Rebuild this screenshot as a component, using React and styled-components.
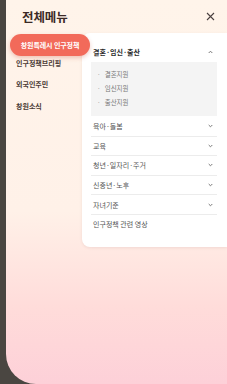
import React from 'react';
import styled, { createGlobalStyle } from 'styled-components';

const GlobalStyle = createGlobalStyle`
  html, body { margin: 0; padding: 0; }
  body {
    background: #4a4641;
    font-family: "Noto Sans CJK KR", "Noto Sans", sans-serif;
    overflow: hidden;
  }
`;

const Screen = styled.div`
  display: flex;
  width: 227px;
  height: 384px;
  background: #4a4641;
`;

const Edge = styled.div`
  width: 6px;
  flex-shrink: 0;
`;

const Panel = styled.div`
  flex: 1;
  display: flex;
  flex-direction: column;
  background: linear-gradient(180deg, #fff4ea 0%, #fff1e8 55%, #ffdcda 80%, #fdd0d8 100%);
  border-bottom-left-radius: 30px;
  overflow: hidden;
`;

const Header = styled.div`
  height: 33px;
  display: flex;
  align-items: center;
  justify-content: space-between;
  padding: 0 10px 0 16px;
  box-sizing: border-box;
`;

const Title = styled.h1`
  margin: 0;
  font-size: 12.5px;
  font-weight: 700;
  color: #3b2a26;
  letter-spacing: -0.1px;
`;

const CloseButton = styled.button`
  border: 0;
  background: none;
  padding: 0;
  width: 14px;
  height: 14px;
  display: flex;
  align-items: center;
  justify-content: center;
  cursor: pointer;
`;

const Body = styled.div`
  display: flex;
  align-items: flex-start;
`;

const SideNav = styled.nav`
  width: 76px;
  flex-shrink: 0;
  display: flex;
  flex-direction: column;
  padding-top: 1px;
`;

const ActivePill = styled.div`
  position: relative;
  z-index: 2;
  width: 80px;
  height: 22px;
  margin-left: 4px;
  border-radius: 11px;
  background: #f26a5a;
  box-shadow: 0 2px 4px rgba(200, 80, 60, 0.3);
  color: #fff;
  font-size: 7px;
  font-weight: 700;
  display: flex;
  align-items: center;
  justify-content: center;
  white-space: nowrap;
  letter-spacing: -0.1px;
`;

const SideList = styled.div`
  display: flex;
  flex-direction: column;
  margin-top: -4px;
`;

const SideItem = styled.div`
  height: 21.5px;
  display: flex;
  align-items: center;
  padding-left: 10px;
  font-size: 7px;
  font-weight: 700;
  color: #4a3a35;
`;

const Card = styled.div`
  flex: 1;
  background: #fff;
  border-radius: 8px 0 0 8px;
  padding: 10px 10px 13px 9px;
  box-shadow: 0 1px 3px rgba(150, 100, 90, 0.12);
`;

const Row = styled.div`
  height: ${p => (p.$first ? 18 : 19.6)}px;
  display: flex;
  align-items: center;
  justify-content: space-between;
  padding: 0 4px 0 2px;
  font-size: 7px;
  font-weight: ${p => (p.$open ? 700 : 400)};
  color: ${p => (p.$open ? '#2a2a2a' : '#555')};
  box-sizing: border-box;
  & + & { border-top: 1px solid #ececec; }
`;

const SubBox = styled.div`
  margin-top: 1px;
  background: #f4f4f4;
  padding: 5px 6px 7px 6px;
  display: flex;
  flex-direction: column;
`;

const SubItem = styled.div`
  height: 14px;
  display: flex;
  align-items: center;
  font-size: 6.5px;
  color: #777;
  &::before {
    content: '·';
    margin-right: 4px;
    color: #aaa;
  }
`;

const Chevron = ({ up }) => (
  <svg width="5" height="4" viewBox="0 0 5 4">
    <path d={up ? 'M0.7 3 L2.5 1.2 L4.3 3' : 'M0.7 1 L2.5 2.8 L4.3 1'} fill="none" stroke="#777" strokeWidth="1" />
  </svg>
);

const items = ['육아·돌봄', '교육', '청년·일자리·주거', '신중년·노후', '자녀기준'];

export default function App() {
  return (
    <>
      <GlobalStyle />
      <Screen>
        <Edge />
        <Panel>
          <Header>
            <Title>전체메뉴</Title>
            <CloseButton aria-label="닫기">
              <svg width="9" height="9" viewBox="0 0 9 9">
                <path d="M1 1 L8 8 M8 1 L1 8" stroke="#4a4040" strokeWidth="1.1" />
              </svg>
            </CloseButton>
          </Header>
          <Body>
            <SideNav>
              <ActivePill>창원특례시 인구정책</ActivePill>
              <SideList>
                <SideItem>인구정책브리핑</SideItem>
                <SideItem>외국인주민</SideItem>
                <SideItem>창원소식</SideItem>
              </SideList>
            </SideNav>
            <Card>
              <Row $first $open>
                결혼·임신·출산
                <Chevron up />
              </Row>
              <SubBox>
                <SubItem>결혼지원</SubItem>
                <SubItem>임신지원</SubItem>
                <SubItem>출산지원</SubItem>
              </SubBox>
              {items.map(t => (
                <Row key={t}>
                  {t}
                  <Chevron />
                </Row>
              ))}
              <Row>인구정책 관련 영상</Row>
            </Card>
          </Body>
        </Panel>
      </Screen>
    </>
  );
}
